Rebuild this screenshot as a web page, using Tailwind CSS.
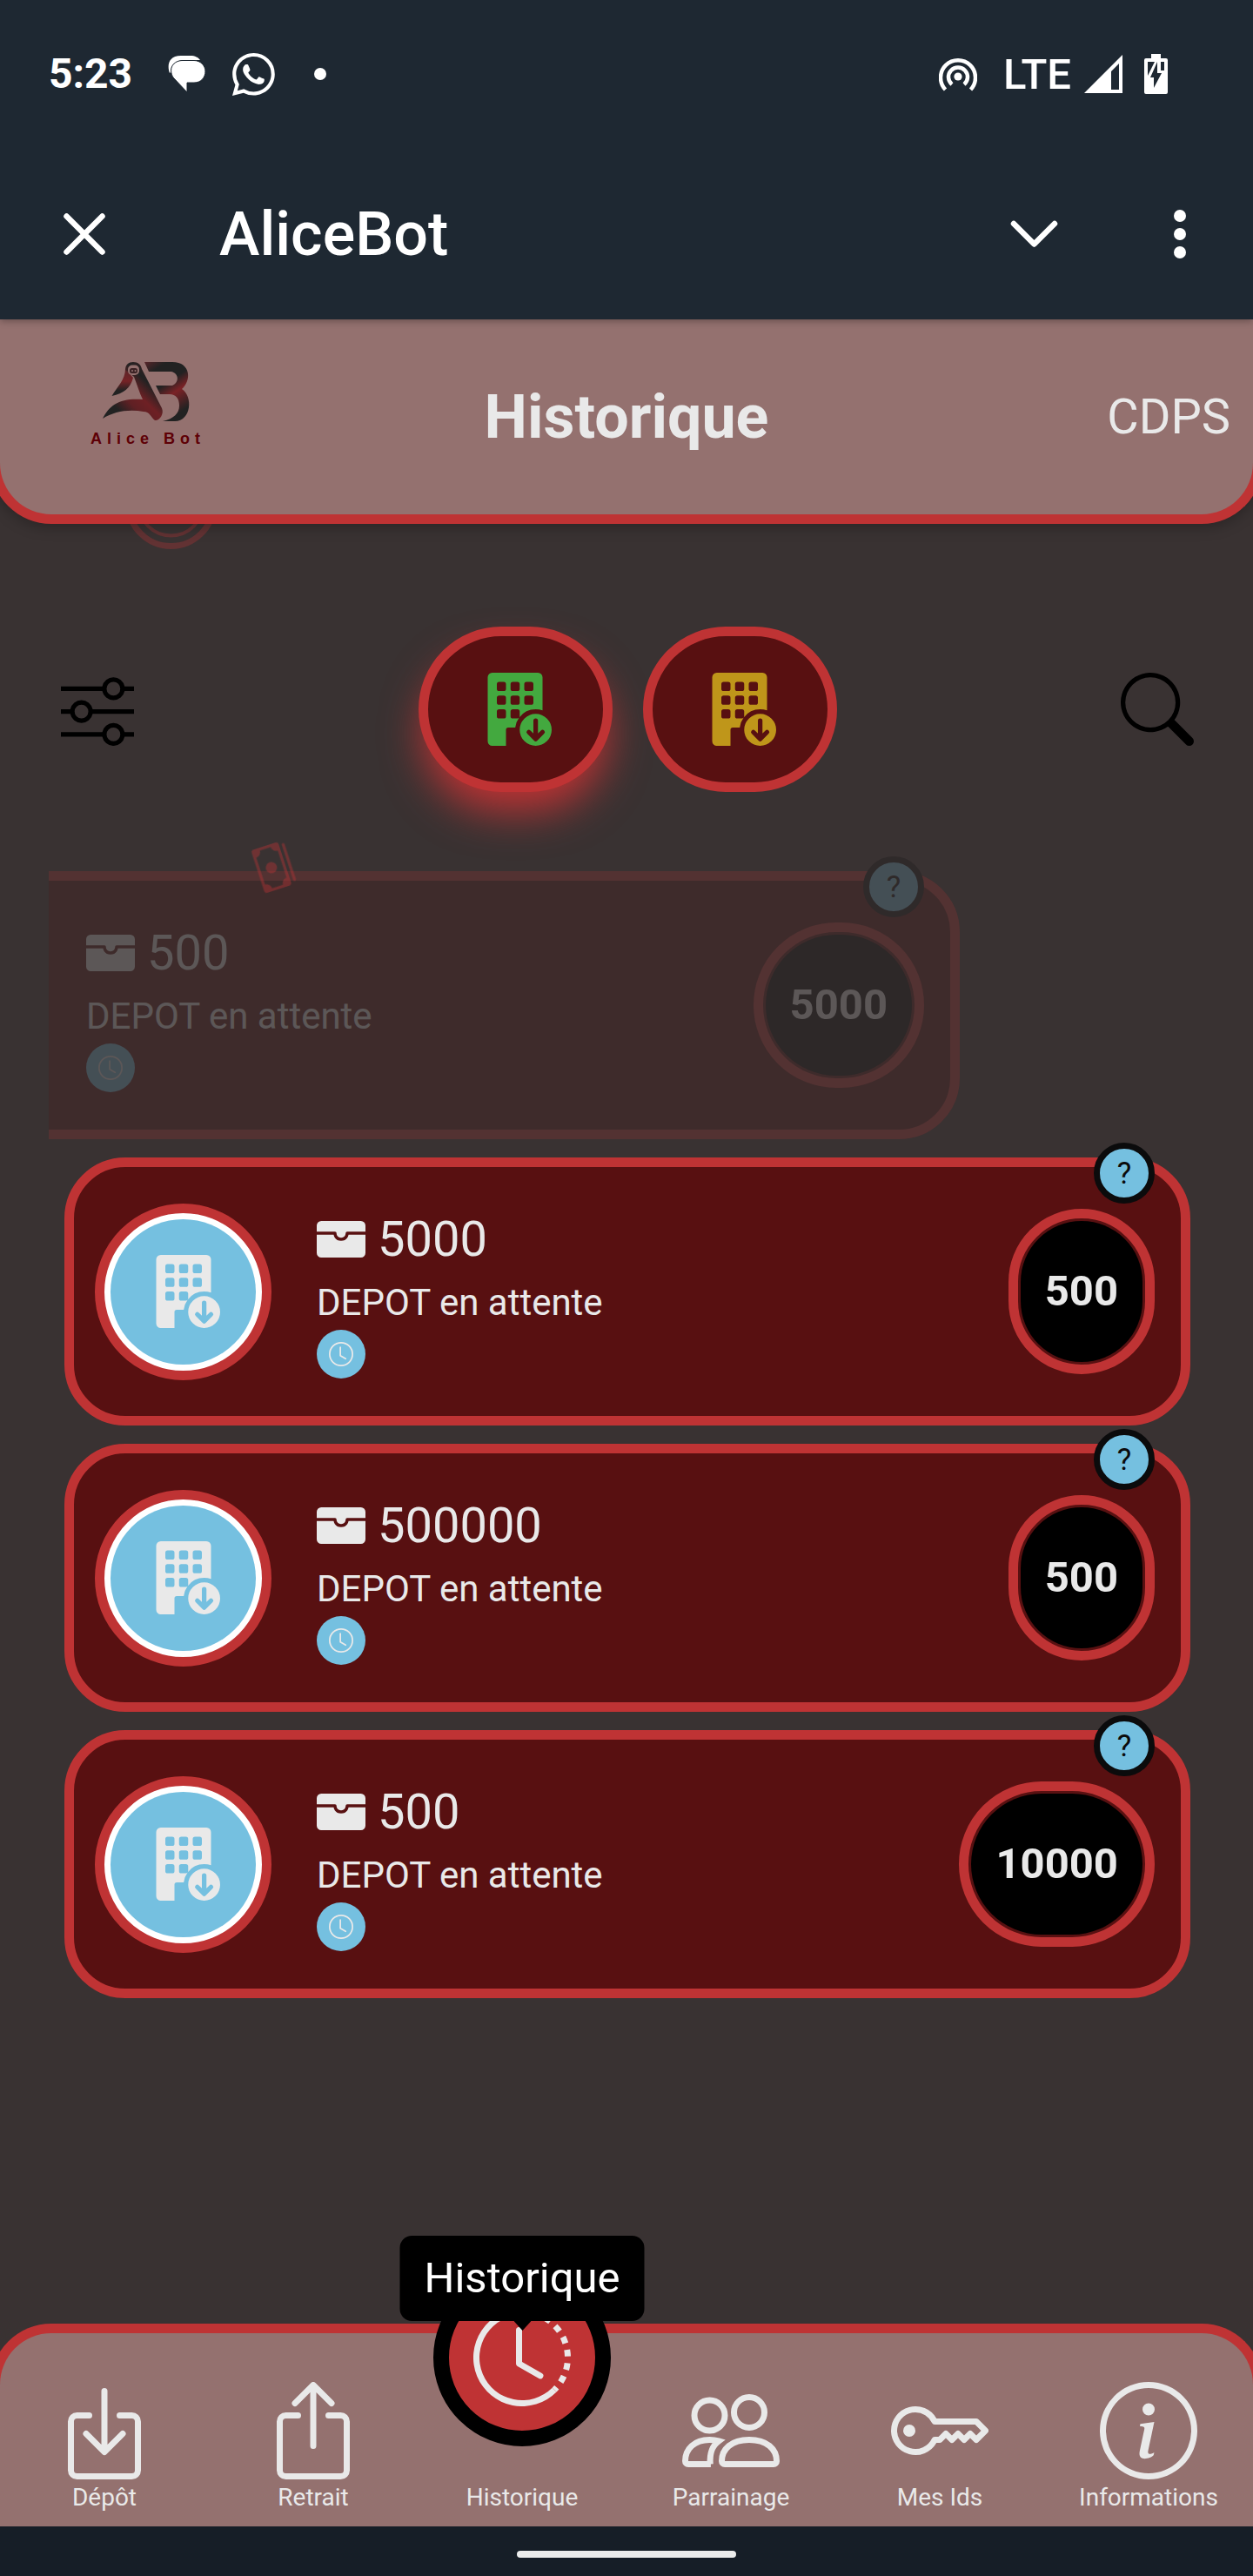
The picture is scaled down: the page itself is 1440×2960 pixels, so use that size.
<!DOCTYPE html>
<html lang="fr">
<head>
<meta charset="utf-8">
<meta name="viewport" content="width=device-width, initial-scale=1">
<title>AliceBot – Historique</title>
<script src="https://cdn.jsdelivr.net/npm/@tailwindcss/browser@4"></script>
</head>
<body class="bg-[#393232] font-['Roboto',sans-serif] text-[#e9e9e9]">
<svg class="hidden" aria-hidden="true">
  <symbol id="building" viewBox="0 0 16 16">
    <path d="M12.5 9a3.5 3.5 0 1 1 0 7 3.5 3.5 0 0 1 0-7m.354 5.854 1.5-1.5a.5.5 0 0 0-.708-.708l-.646.647V10.5a.5.5 0 0 0-1 0v2.793l-.646-.647a.5.5 0 0 0-.708.708l1.5 1.5a.5.5 0 0 0 .708 0"/>
    <path fill-rule="evenodd" d="M2 1a1 1 0 0 1 1-1h10a1 1 0 0 1 1 1v7.256A4.5 4.5 0 0 0 12.5 8a4.5 4.5 0 0 0-3.59 1.787A.5.5 0 0 0 9 9.5v-1a.5.5 0 0 0-.5-.5h-1a.5.5 0 0 0-.5.5v1a.5.5 0 0 0 .5.5h1a.5.5 0 0 0 .39-.187A4.5 4.5 0 0 0 8.027 12H6.5a.5.5 0 0 0-.5.5V16H3a1 1 0 0 1-1-1zM4.500 2h1a.5.5 0 0 1 .5.5v1a.5.5 0 0 1-.5.5h-1a.5.5 0 0 1-.5-.5v-1a.5.5 0 0 1 .5-.5zM7.500 2h1a.5.5 0 0 1 .5.5v1a.5.5 0 0 1-.5.5h-1a.5.5 0 0 1-.5-.5v-1a.5.5 0 0 1 .5-.5zM10.500 2h1a.5.5 0 0 1 .5.5v1a.5.5 0 0 1-.5.5h-1a.5.5 0 0 1-.5-.5v-1a.5.5 0 0 1 .5-.5zM4.500 5h1a.5.5 0 0 1 .5.5v1a.5.5 0 0 1-.5.5h-1a.5.5 0 0 1-.5-.5v-1a.5.5 0 0 1 .5-.5zM7.500 5h1a.5.5 0 0 1 .5.5v1a.5.5 0 0 1-.5.5h-1a.5.5 0 0 1-.5-.5v-1a.5.5 0 0 1 .5-.5zM10.500 5h1a.5.5 0 0 1 .5.5v1a.5.5 0 0 1-.5.5h-1a.5.5 0 0 1-.5-.5v-1a.5.5 0 0 1 .5-.5zM4.500 8h1a.5.5 0 0 1 .5.5v1a.5.5 0 0 1-.5.5h-1a.5.5 0 0 1-.5-.5v-1a.5.5 0 0 1 .5-.5z"/>
  </symbol>
  <symbol id="wallet" viewBox="0 0 16 16">
    <path d="M1.500 2A1.500 1.500 0 0 0 0 3.500v2h6a.5.5 0 0 1 .5.5c0 .253.08.644.306.958.207.288.557.542 1.194.542s.987-.254 1.194-.542C9.420 6.644 9.500 6.253 9.500 6a.5.5 0 0 1 .5-.5h6v-2A1.500 1.500 0 0 0 14.500 2z"/>
    <path d="M16 6.500h-5.551a2.700 2.700 0 0 1-.443 1.042C9.613 8.088 8.963 8.500 8 8.500s-1.613-.412-2.006-.958A2.700 2.700 0 0 1 5.551 6.500H0v6A1.500 1.500 0 0 0 1.500 14h13a1.500 1.500 0 0 0 1.500-1.500z"/>
  </symbol>
  <symbol id="clock" viewBox="0 0 16 16">
    <path d="M8 3.500a.5.5 0 0 0-1 0V9a.5.5 0 0 0 .252.434l3.500 2a.5.5 0 0 0 .496-.868L8 8.710z"/>
    <path d="M8 16A8 8 0 1 0 8 0a8 8 0 0 0 0 16m7-8A7 7 0 1 1 1 8a7 7 0 0 1 14 0"/>
  </symbol>
  <symbol id="tray" viewBox="0 0 16 16">
    <path d="M3.500 6a.5.5 0 0 0-.5.5v8a.5.5 0 0 0 .5.5h9a.5.5 0 0 0 .5-.5v-8a.5.5 0 0 0-.5-.5h-2a.5.5 0 0 1 0-1h2A1.500 1.500 0 0 1 14 6.500v8a1.500 1.500 0 0 1-1.500 1.500h-9A1.500 1.500 0 0 1 2 14.500v-8A1.500 1.500 0 0 1 3.500 5h2a.5.5 0 0 1 0 1z"/>
  </symbol>
</svg>

<div class="flex min-h-screen flex-col overflow-x-clip">
  <!-- Phone status bar -->
  <div class="relative z-30 flex h-[170px] items-center bg-[#1e2832] pl-14 pr-[98px] text-white">
    <span class="w-[137px] text-[48px] font-bold leading-none">5:23</span>
    <svg class="h-[42px] w-[43px]" viewBox="0 0 43 42" fill="currentColor" aria-hidden="true">
      <path d="M2 20C-1 12 0 0 15 0h11c5 0 9 2 11 5H19C10 5 3 10 3 19z"/>
      <path d="M17 5.500h13C37 5.500 43 11 43 18s-5 13-13 13h-8v11L6 25C0 15 6 5.500 17 5.500z" stroke="#1e2832" stroke-width="1"/>
    </svg>
    <svg class="ml-[31px] size-[49px]" viewBox="0 0 16 16" fill="currentColor" aria-hidden="true">
      <path d="M13.601 2.326A7.850 7.850 0 0 0 7.994 0C3.627 0 .068 3.558.064 7.926c0 1.399.366 2.760 1.057 3.965L0 16l4.204-1.102a7.900 7.900 0 0 0 3.790.965h.004c4.368 0 7.926-3.558 7.930-7.930A7.900 7.900 0 0 0 13.600 2.326zM7.994 14.521a6.600 6.600 0 0 1-3.356-.920l-.240-.144-2.494.654.666-2.433-.156-.251a6.560 6.560 0 0 1-1.007-3.505c0-3.626 2.957-6.584 6.591-6.584a6.560 6.560 0 0 1 4.660 1.931 6.560 6.560 0 0 1 1.928 4.660c-.004 3.639-2.961 6.592-6.592 6.592m3.615-4.934c-.197-.099-1.170-.578-1.353-.646-.182-.065-.315-.099-.445.099-.133.197-.513.646-.627.775-.114.133-.232.148-.430.050-.197-.100-.836-.308-1.592-.985-.590-.525-.985-1.175-1.103-1.372-.114-.198-.011-.304.088-.403.087-.088.197-.232.296-.346.100-.114.133-.198.198-.330.065-.134.034-.248-.015-.347-.050-.099-.445-1.076-.612-1.470-.160-.389-.323-.335-.445-.340-.114-.007-.247-.007-.380-.007a.730.730 0 0 0-.529.247c-.182.198-.691.677-.691 1.654s.710 1.916.810 2.049c.098.133 1.394 2.132 3.383 2.992.470.205.840.326 1.129.418.475.152.904.129 1.246.080.380-.058 1.171-.480 1.338-.943.164-.464.164-.860.114-.943-.049-.084-.182-.133-.380-.232"/>
    </svg>
    <span class="ml-[45px] size-[14px] rounded-full bg-white"></span>
    <svg class="ml-auto h-[40px] w-[44px]" viewBox="0 0 44 40" fill="none" stroke="currentColor" stroke-width="4.500" aria-hidden="true">
      <circle cx="22" cy="23" r="4.600" fill="currentColor" stroke="none"/>
      <path d="M15 32a11 11 0 1 1 14 0"/><path d="M7.500 38a20 20 0 1 1 29 0"/>
    </svg>
    <span class="ml-[30px] text-[49px] font-medium leading-none">LTE</span>
    <svg class="ml-[15px] size-[44px]" viewBox="0 0 44 44" fill="currentColor" fill-rule="evenodd" aria-hidden="true">
      <path d="M0 44 44 0v44zM31 19v21h9V10z"/>
    </svg>
    <svg class="ml-[25px] h-[46px] w-[27px]" viewBox="0 0 27 46" aria-hidden="true">
      <path fill="currentColor" d="M8 0h11v5h6a2 2 0 0 1 2 2v37a2 2 0 0 1-2 2H2a2 2 0 0 1-2-2V7a2 2 0 0 1 2-2h6z"/>
      <path fill="#1e2832" d="M4 9h8L4 25zM15 9 7 27h4v12l9-17h-5zM19 9h4v10h-4z"/>
    </svg>
  </div>

  <!-- Mini-app title bar -->
  <div class="relative z-20 flex h-[197px] items-center bg-[#1e2832] pl-[72px] pr-[76px] text-white shadow-[0_2px_8px_rgba(0,0,0,0.3)]">
    <button type="button" aria-label="Fermer" class="size-[50px]">
      <svg viewBox="0 0 50 50" fill="none" stroke="currentColor" stroke-width="6.500" stroke-linecap="round"><path d="M4.500 4.500l41 41M45.500 4.500l-41 41"/></svg>
    </button>
    <span class="ml-[130px] text-[70px] font-medium leading-none">AliceBot</span>
    <button type="button" aria-label="Réduire" class="ml-auto h-[32px] w-[55px]">
      <svg viewBox="0 0 55 32" fill="none" stroke="currentColor" stroke-width="6.500" stroke-linecap="round" stroke-linejoin="round"><path d="M4 4l23.500 23.500L51 4"/></svg>
    </button>
    <button type="button" aria-label="Plus d’options" class="ml-[132px] h-[56px] w-[16px]">
      <svg viewBox="0 0 16 56" fill="currentColor"><circle cx="8" cy="7" r="7"/><circle cx="8" cy="28" r="7"/><circle cx="8" cy="49" r="7"/></svg>
    </button>
  </div>

  <!-- Page header -->
  <header class="relative z-10 -mx-[11px] grid h-[235px] grid-cols-[1fr_auto_1fr] items-center rounded-b-[70px] border-x-[11px] border-b-[11px] border-[#bf3334] bg-[#94716f] shadow-[0_4px_16px_rgba(0,0,0,0.25)]">
    <a href="#" aria-label="Alice Bot" class="ml-[104px] flex w-[136px] flex-col pb-7 text-[#5e0006]">
      <svg class="h-[70px] w-[130px]" viewBox="0 0 130 70" aria-hidden="true">
        <defs>
          <linearGradient id="legGradient" x1="0" y1="1" x2="1" y2="0"><stop offset="0" stop-color="#222"/><stop offset=".22" stop-color="#222"/><stop offset=".38" stop-color="#5f2024"/><stop offset=".52" stop-color="#6e2024"/><stop offset=".7" stop-color="#222"/><stop offset="1" stop-color="#4a2023"/></linearGradient>
          <linearGradient id="letterGradient" x1="0" y1="0" x2=".5" y2="1"><stop offset="0" stop-color="#58262a"/><stop offset=".2" stop-color="#222"/><stop offset=".48" stop-color="#222"/><stop offset=".68" stop-color="#7b2226"/><stop offset="1" stop-color="#222"/></linearGradient>
          <linearGradient id="armGradient" x1="0" y1="0" x2="0" y2="1"><stop offset="0" stop-color="#5a2529"/><stop offset=".45" stop-color="#762226"/><stop offset=".8" stop-color="#222"/></linearGradient>
        </defs>
        <path fill="url(#armGradient)" d="M40 8c0 12-9 20-15.500 31C38 36 46 30 49 18z"/>
        <path fill="url(#legGradient)" d="M40 9C40 3 44 0 49 0c6 0 9 3 10 8l23 45c3 7-3 15-8 14-5-4-6-10-13-10-18-3-34 0-47 8 8-16 20-24 46-22C56 35 54 27 50 17z"/>
        <rect x="43" y="3.500" width="13" height="11.500" rx="5" fill="#94716f"/>
        <rect x="45" y="7" width="9" height="6" rx="2.500" fill="#3b2224"/>
        <circle cx="48" cy="10" r="1" fill="#94716f"/><circle cx="51.500" cy="10" r="1" fill="#94716f"/>
        <path fill="url(#letterGradient)" d="M62 0h32c22 0 22 22 11 31 13 8 11 37-8 37H83c13-3 19-9 19-18 0-8-4-13-11-13H80l-5-10h19c8-3 8-14-1-16H67z"/>
      </svg>
      <span class="mt-2 whitespace-nowrap font-['Liberation_Sans',sans-serif] text-[18px] font-bold leading-5 tracking-[6px]">Alice Bot</span>
    </a>
    <h1 class="text-[70px] font-bold leading-none">Historique</h1>
    <span class="mr-[26px] justify-self-end text-[56px] leading-none">CDPS</span>
  </header>

  <main class="relative flex-1">
    <svg class="absolute -top-[76px] left-[144px] size-[105px]" viewBox="0 0 105 105" fill="none" stroke="#623233" aria-hidden="true"><circle cx="52.500" cy="52.500" r="49" stroke-width="7"/><circle cx="52.500" cy="52.500" r="37" stroke-width="4"/></svg>

    <!-- Filters -->
    <div class="flex items-center justify-between pl-[70px] pr-[68px] pt-[118px] text-black">
      <button type="button" aria-label="Filtrer" class="size-[84px]">
        <svg viewBox="0 0 16 16" fill="currentColor" fill-rule="evenodd"><path d="M11.500 2a1.500 1.500 0 1 0 0 3 1.500 1.500 0 0 0 0-3M9.050 3a2.500 2.500 0 0 1 4.900 0H16v1h-2.050a2.500 2.500 0 0 1-4.900 0H0V3zM4.500 7a1.500 1.500 0 1 0 0 3 1.500 1.500 0 0 0 0-3M2.050 8a2.500 2.500 0 0 1 4.900 0H16v1H6.950a2.500 2.500 0 0 1-4.900 0H0V8zm9.450 4a1.500 1.500 0 1 0 0 3 1.500 1.500 0 0 0 0-3m-2.450 1a2.500 2.500 0 0 1 4.900 0H16v1h-2.050a2.500 2.500 0 0 1-4.900 0H0v-1z"/></svg>
      </button>
      <div class="flex gap-[35px]">
        <button type="button" aria-label="Dépôts validés" class="flex h-[190px] w-[223px] items-center justify-center rounded-full border-[11px] border-[#bf3334] bg-[#581011] text-[#43a93f] shadow-[0_28px_48px_-6px_#bf3334]">
          <svg class="size-[84px]" fill="currentColor"><use href="#building"/></svg>
        </button>
        <button type="button" aria-label="Dépôts en attente" class="flex h-[190px] w-[223px] items-center justify-center rounded-full border-[11px] border-[#bf3334] bg-[#581011] text-[#bf961a]">
          <svg class="size-[84px]" fill="currentColor"><use href="#building"/></svg>
        </button>
      </div>
      <button type="button" aria-label="Rechercher" class="size-[84px]">
        <svg viewBox="0 0 16 16" fill="currentColor"><path d="M11.742 10.344a6.500 6.500 0 1 0-1.397 1.398h-.001q.044.060.098.115l3.850 3.850a1 1 0 0 0 1.415-1.414l-3.850-3.850a1 1 0 0 0-.115-.100zM12 6.500a5.500 5.500 0 1 1-11 0 5.500 5.500 0 0 1 11 0"/></svg>
      </button>
    </div>

    <!-- Transactions -->
    <ul class="mx-14 mt-[91px] flex flex-col gap-[21px] overflow-x-clip pl-[18px] pr-4">
      <li class="relative flex h-[308px] -translate-x-[265px] items-center rounded-[70px] border-[11px] border-[#bf3334] bg-[#581011] pl-6 pr-[30px] opacity-20">
        <div class="flex size-[203px] items-center justify-center rounded-full border-[11px] border-[#bf3334] bg-white p-[7px]"><div class="flex size-full items-center justify-center rounded-full bg-[#75c0e0]"><svg class="size-[84px]" fill="currentColor"><use href="#building"/></svg></div></div>
        <div class="ml-[52px] pb-[2px]">
          <p class="flex items-center gap-[14px] text-[56px] leading-[84px]"><svg class="size-14" fill="currentColor"><use href="#wallet"/></svg>500</p>
          <p class="text-[42px] leading-[62px]">DEPOT en attente</p>
          <div class="flex size-14 items-center justify-center rounded-full bg-[#75c0e0]"><svg class="size-7" fill="currentColor"><use href="#clock"/></svg></div>
        </div>
        <div class="ml-auto h-[190px] rounded-full border-[11px] border-[#bf3334] p-[3px]"><strong class="flex h-full items-center rounded-full bg-black px-7 text-[49px] font-bold">5000</strong></div>
        <button type="button" aria-label="Aide" class="absolute -top-7 right-[30px] flex size-[70px] items-center justify-center rounded-full border-[7px] border-[#0b0b0c] bg-[#75c0e0] text-[35px] leading-none text-[#0b0b0c]">?</button>
      </li>
      <li class="relative flex h-[308px] items-center rounded-[70px] border-[11px] border-[#bf3334] bg-[#581011] pl-6 pr-[30px]">
        <div class="flex size-[203px] items-center justify-center rounded-full border-[11px] border-[#bf3334] bg-white p-[7px]"><div class="flex size-full items-center justify-center rounded-full bg-[#75c0e0]"><svg class="size-[84px]" fill="currentColor"><use href="#building"/></svg></div></div>
        <div class="ml-[52px] pb-[2px]">
          <p class="flex items-center gap-[14px] text-[56px] leading-[84px]"><svg class="size-14" fill="currentColor"><use href="#wallet"/></svg>5000</p>
          <p class="text-[42px] leading-[62px]">DEPOT en attente</p>
          <div class="flex size-14 items-center justify-center rounded-full bg-[#75c0e0]"><svg class="size-7" fill="currentColor"><use href="#clock"/></svg></div>
        </div>
        <div class="ml-auto h-[190px] rounded-full border-[11px] border-[#bf3334] p-[3px]"><strong class="flex h-full items-center rounded-full bg-black px-7 text-[49px] font-bold">500</strong></div>
        <button type="button" aria-label="Aide" class="absolute -top-7 right-[30px] flex size-[70px] items-center justify-center rounded-full border-[7px] border-[#0b0b0c] bg-[#75c0e0] text-[35px] leading-none text-[#0b0b0c]">?</button>
      </li>
      <li class="relative flex h-[308px] items-center rounded-[70px] border-[11px] border-[#bf3334] bg-[#581011] pl-6 pr-[30px]">
        <div class="flex size-[203px] items-center justify-center rounded-full border-[11px] border-[#bf3334] bg-white p-[7px]"><div class="flex size-full items-center justify-center rounded-full bg-[#75c0e0]"><svg class="size-[84px]" fill="currentColor"><use href="#building"/></svg></div></div>
        <div class="ml-[52px] pb-[2px]">
          <p class="flex items-center gap-[14px] text-[56px] leading-[84px]"><svg class="size-14" fill="currentColor"><use href="#wallet"/></svg>500000</p>
          <p class="text-[42px] leading-[62px]">DEPOT en attente</p>
          <div class="flex size-14 items-center justify-center rounded-full bg-[#75c0e0]"><svg class="size-7" fill="currentColor"><use href="#clock"/></svg></div>
        </div>
        <div class="ml-auto h-[190px] rounded-full border-[11px] border-[#bf3334] p-[3px]"><strong class="flex h-full items-center rounded-full bg-black px-7 text-[49px] font-bold">500</strong></div>
        <button type="button" aria-label="Aide" class="absolute -top-7 right-[30px] flex size-[70px] items-center justify-center rounded-full border-[7px] border-[#0b0b0c] bg-[#75c0e0] text-[35px] leading-none text-[#0b0b0c]">?</button>
      </li>
      <li class="relative flex h-[308px] items-center rounded-[70px] border-[11px] border-[#bf3334] bg-[#581011] pl-6 pr-[30px]">
        <div class="flex size-[203px] items-center justify-center rounded-full border-[11px] border-[#bf3334] bg-white p-[7px]"><div class="flex size-full items-center justify-center rounded-full bg-[#75c0e0]"><svg class="size-[84px]" fill="currentColor"><use href="#building"/></svg></div></div>
        <div class="ml-[52px] pb-[2px]">
          <p class="flex items-center gap-[14px] text-[56px] leading-[84px]"><svg class="size-14" fill="currentColor"><use href="#wallet"/></svg>500</p>
          <p class="text-[42px] leading-[62px]">DEPOT en attente</p>
          <div class="flex size-14 items-center justify-center rounded-full bg-[#75c0e0]"><svg class="size-7" fill="currentColor"><use href="#clock"/></svg></div>
        </div>
        <div class="ml-auto h-[190px] rounded-full border-[11px] border-[#bf3334] p-[3px]"><strong class="flex h-full items-center rounded-full bg-black px-7 text-[49px] font-bold">10000</strong></div>
        <button type="button" aria-label="Aide" class="absolute -top-7 right-[30px] flex size-[70px] items-center justify-center rounded-full border-[7px] border-[#0b0b0c] bg-[#75c0e0] text-[35px] leading-none text-[#0b0b0c]">?</button>
      </li>
    </ul>

    <!-- Floating banknotes -->
    <svg class="absolute left-[289px] top-[368px] size-[52px] rotate-72 text-[#bf3334]/40" viewBox="0 0 16 16" fill="currentColor" aria-hidden="true">
      <path d="M1 2.500a.5.5 0 0 1 .5-.5h13a.5.5 0 0 1 0 1h-13a.5.5 0 0 1-.5-.5M10 9a2 2 0 1 1-4 0 2 2 0 0 1 4 0"/>
      <path d="M0 5a1 1 0 0 1 1-1h14a1 1 0 0 1 1 1v8a1 1 0 0 1-1 1H1a1 1 0 0 1-1-1zm3 0a2 2 0 0 1-2 2v4a2 2 0 0 1 2 2h10a2 2 0 0 1 2-2V7a2 2 0 0 1-2-2z"/>
    </svg>
  </main>

  <!-- Bottom navigation -->
  <nav class="relative -mx-[11px] grid grid-cols-6 rounded-t-[70px] border-x-[11px] border-t-[11px] border-[#bf3334] bg-[#94716f] pb-3 pt-14 text-[28px] leading-[42px]">
    <a href="#" class="flex flex-col items-center">
      <svg class="size-28" viewBox="0 0 16 16" fill="currentColor"><use href="#tray"/><path d="M7.646 11.854a.5.5 0 0 0 .708 0l3-3a.5.5 0 0 0-.708-.708L8.500 10.293V1.500a.5.5 0 0 0-1 0v8.793L5.354 8.146a.5.5 0 1 0-.708.708z"/></svg>
      Dépôt</a>
    <a href="#" class="flex flex-col items-center">
      <svg class="size-28" viewBox="0 0 16 16" fill="currentColor"><use href="#tray"/><path d="M7.646.146a.5.5 0 0 1 .708 0l3 3a.5.5 0 0 1-.708.708L8.500 1.707V10.500a.5.5 0 0 1-1 0V1.707L5.354 3.854a.5.5 0 1 1-.708-.708z"/></svg>
      Retrait</a>
    <a href="#" aria-current="page" class="relative flex flex-col items-center pt-28">
      <span class="absolute -top-[130px] left-1/2 flex size-[204px] -translate-x-1/2 items-center justify-center rounded-full border-[18px] border-black bg-[#bf3334]">
        <svg class="size-28" viewBox="0 0 16 16" fill="currentColor"><path d="M8.515 1.019A7 7 0 0 0 8 1V0a8 8 0 0 1 .589.022zm2.004.450a7 7 0 0 0-.985-.299l.219-.976q.576.129 1.126.342zm1.370.710a7 7 0 0 0-.439-.270l.493-.870a8 8 0 0 1 .979.654l-.615.789a7 7 0 0 0-.418-.302zm1.834 1.790a7 7 0 0 0-.653-.796l.724-.690q.406.429.747.910zm.744 1.352a7 7 0 0 0-.214-.468l.893-.450a8 8 0 0 1 .450 1.088l-.950.313a7 7 0 0 0-.179-.483m.530 2.507a7 7 0 0 0-.100-1.025l.985-.170q.100.580.116 1.170zm-.131 1.538q.050-.254.081-.510l.993.123a8 8 0 0 1-.230 1.155l-.964-.267q.069-.247.120-.501m-.952 2.379q.276-.436.486-.908l.914.405q-.240.540-.555 1.038zm-.964 1.205q.183-.183.350-.378l.758.653a8 8 0 0 1-.401.432z"/><path d="M8 1a7 7 0 1 0 4.950 11.950l.707.707A8.001 8.001 0 1 1 8 0z"/><path d="M7.500 3a.5.5 0 0 1 .5.5v5.210l3.248 1.856a.5.5 0 0 1-.496.868l-3.500-2A.5.5 0 0 1 7 9V3.500a.5.5 0 0 1 .5-.5"/></svg>
      </span>
      <span role="tooltip" class="absolute -top-[168px] left-1/2 -translate-x-1/2 rounded-[14px] bg-black px-7 text-[49px] leading-[98px] text-white">Historique<svg class="absolute left-1/2 top-full h-[11px] w-[20px] -translate-x-1/2" viewBox="0 0 20 11"><path d="M0 0h20L10 11z"/></svg></span>
      Historique</a>
    <a href="#" class="flex flex-col items-center">
      <svg class="size-28" viewBox="0 0 16 16" fill="none" stroke="currentColor"><circle cx="4.500" cy="5.500" r="2.500"/><circle cx="11" cy="5" r="2.500"/><path d="M7 13.500h8a.5.5 0 0 0 .5-.5c0-2-1.600-3.500-4.500-3.500S6.500 11 6.500 13a.5.5 0 0 0 .5.5zM4.700 13.500H1a.5.5 0 0 1-.5-.5c0-2 1.500-3.500 4-3.500q.8 0 1.500.2C4.800 10.600 4.500 11.800 4.600 13.500z"/></svg>
      Parrainage</a>
    <a href="#" class="flex flex-col items-center">
      <svg class="size-28" viewBox="0 0 16 16" fill="currentColor"><path d="M0 8a4 4 0 0 1 7.465-2H14a.5.5 0 0 1 .354.146l1.500 1.500a.5.5 0 0 1 0 .708l-1.500 1.500a.5.5 0 0 1-.708 0L13 9.207l-.646.647a.5.5 0 0 1-.708 0L11 9.207l-.646.647a.5.5 0 0 1-.708 0L9 9.207l-.646.647A.5.5 0 0 1 8 10h-.535A4 4 0 0 1 0 8m4-3a3 3 0 1 0 2.712 4.285A.5.5 0 0 1 7.163 9h.630l.853-.854a.5.5 0 0 1 .708 0l.646.647.646-.647a.5.5 0 0 1 .708 0l.646.647.646-.647a.5.5 0 0 1 .708 0l.646.647.793-.793-1-1h-6.630a.5.5 0 0 1-.451-.285A3 3 0 0 0 4 5"/><path d="M4 8a1 1 0 1 1-2 0 1 1 0 0 1 2 0"/></svg>
      Mes Ids</a>
    <a href="#" class="flex flex-col items-center">
      <svg class="size-28" viewBox="0 0 16 16" fill="currentColor"><path d="M8 15A7 7 0 1 1 8 1a7 7 0 0 1 0 14m0 1A8 8 0 1 0 8 0a8 8 0 0 0 0 16"/><path d="m8.930 6.588-2.290.287-.082.380.450.083c.294.070.352.176.288.469l-.738 3.468c-.194.897.105 1.319.808 1.319.545 0 1.178-.252 1.465-.598l.088-.416c-.200.176-.492.246-.686.246-.275 0-.375-.193-.304-.533zM9 4.500a1 1 0 1 1-2 0 1 1 0 0 1 2 0"/></svg>
      Informations</a>
  </nav>

  <!-- System gesture bar -->
  <div class="relative flex h-[57px] items-center justify-center bg-[#161e27] pt-[7px]">
    <span class="h-2 w-[252px] rounded-full bg-[#ebecec]"></span>
  </div>
</div>
</body>
</html>
